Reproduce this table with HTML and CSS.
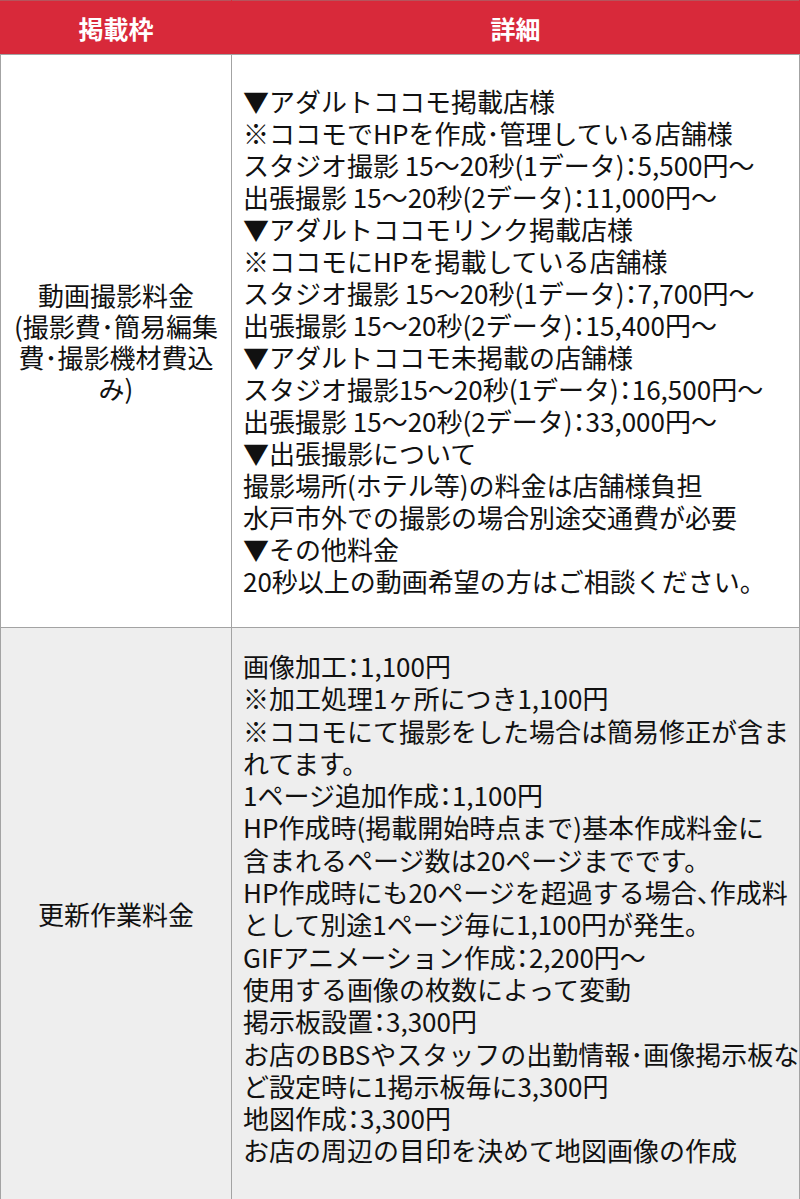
FILE: index.html
```html
<!DOCTYPE html>
<html lang="ja">
<head>
<meta charset="utf-8">
<title>料金表</title>
<link rel="stylesheet" href="styles.css">
</head>
<body>
<table class="price-table">
  <colgroup>
    <col class="c-slot">
    <col class="c-detail">
  </colgroup>
  <thead>
    <tr>
      <th>掲載枠</th>
      <th class="col-detail">詳細</th>
    </tr>
  </thead>
  <tbody>
    <tr class="row-white">
      <td class="slot">動画撮影料金<br>(撮影費<span class="hw">･</span>簡易編集<br>費<span class="hw">･</span>撮影機材費込<br>み)</td>
      <td class="detail detail-first">▼アダルトココモ掲載店様<br>※ココモでHPを作成<span class="hw">･</span>管理している店舗様<br>スタジオ撮影 15～20秒(1データ)<span class="hw">：</span>5,500円～<br>出張撮影 15～20秒(2データ)<span class="hw">：</span>11,000円～<br>▼アダルトココモリンク掲載店様<br>※ココモにHPを掲載している店舗様<br>スタジオ撮影 15～20秒(1データ)<span class="hw">：</span>7,700円～<br>出張撮影 15～20秒(2データ)<span class="hw">：</span>15,400円～<br>▼アダルトココモ未掲載の店舗様<br>スタジオ撮影15～20秒(1データ)<span class="hw">：</span>16,500円～<br>出張撮影 15～20秒(2データ)<span class="hw">：</span>33,000円～<br>▼出張撮影について<br>撮影場所(ホテル等)の料金は店舗様負担<br>水戸市外での撮影の場合別途交通費が必要<br>▼その他料金<br>20秒以上の動画希望の方はご相談ください。</td>
    </tr>
    <tr class="row-gray">
      <td class="slot">更新作業料金</td>
      <td class="detail detail-second">画像加工<span class="hw">：</span>1,100円<br>※加工処理1ヶ所につき1,100円<br>※ココモにて撮影をした場合は簡易修正が含ま<br>れてます。<br>1ページ追加作成<span class="hw">：</span>1,100円<br>HP作成時(掲載開始時点まで)基本作成料金に<br>含まれるページ数は20ページまでです。<br>HP作成時にも20ページを超過する場合<span class="hw">、</span>作成料<br>として別途1ページ毎に1,100円が発生。<br>GIFアニメーション作成<span class="hw">：</span>2,200円～<br>使用する画像の枚数によって変動<br>掲示板設置<span class="hw">：</span>3,300円<br>お店のBBSやスタッフの出勤情報<span class="hw">･</span>画像掲示板な<br>ど設定時に1掲示板毎に3,300円<br>地図作成<span class="hw">：</span>3,300円<br>お店の周辺の目印を決めて地図画像の作成</td>
    </tr>
  </tbody>
</table>
</body>
</html>
```
FILE: styles.css
```css
html, body {
  margin: 0;
  padding: 0;
  background: #ffffff;
}

.price-table {
  width: 800px;
  table-layout: fixed;
  border-collapse: collapse;
  font-family: "Noto Sans CJK JP", "Liberation Sans", sans-serif;
  font-size: 26px;
  color: #111111;
}

.c-slot {
  width: 231px;
}

.price-table th,
.price-table td {
  border: 1px solid #a3a3a3;
}

.price-table th {
  height: 53px;
  padding: 0;
  background: #d8293a;
  color: #ffffff;
  font-weight: bold;
  font-size: 25px;
  line-height: 30px;
  text-align: center;
  vertical-align: middle;
  border-top-color: #b5545c;
  border-left-color: #d8293a;
  border-right-color: #d8293a;
}

.price-table th.col-detail {
  border-left-color: #c9535c;
}

.slot {
  text-align: center;
  vertical-align: middle;
  padding: 0 8px;
  line-height: 31px;
}

.detail {
  vertical-align: top;
  text-align: left;
  white-space: nowrap;
  padding-left: 11px;
  padding-right: 4px;
}

.detail-first {
  line-height: 32px;
  padding-top: 30px;
  padding-bottom: 30px;
}

.detail-second {
  line-height: 32.3px;
  padding-top: 22px;
  padding-bottom: 32px;
}

.row-white td {
  background: #ffffff;
}

.row-gray td {
  background: #eeeeee;
}

.hw {
  font-feature-settings: "halt";
}
```
